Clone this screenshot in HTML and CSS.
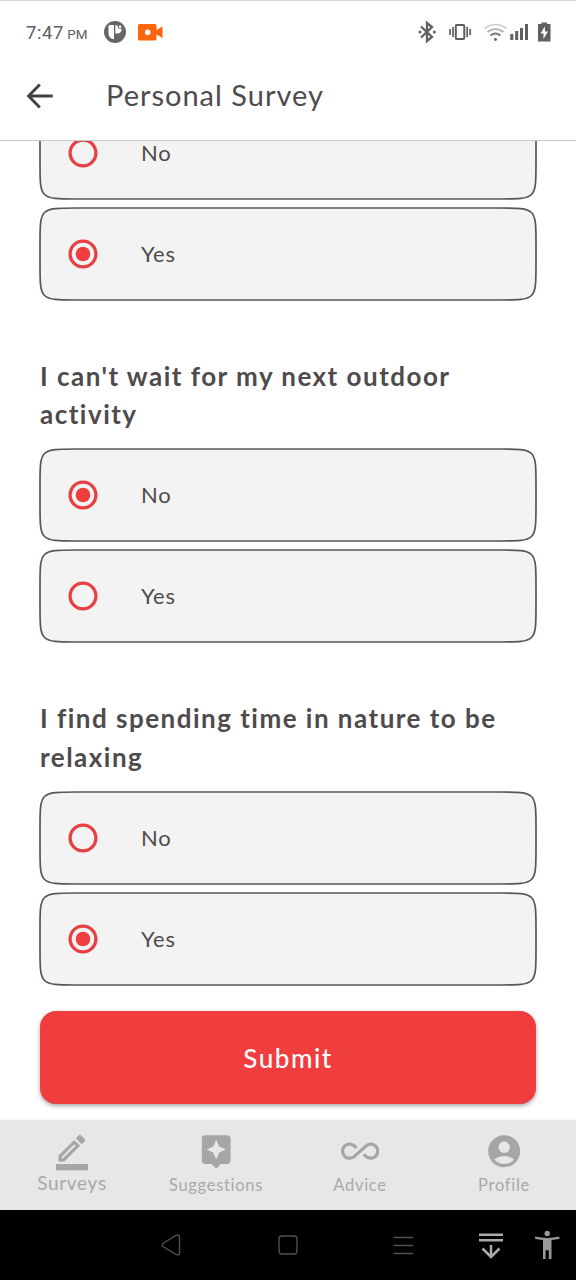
FILE: index.html
```html
<!DOCTYPE html>
<html lang="en">
<head>
<meta charset="utf-8">
<title>Personal Survey</title>
<link rel="stylesheet" href="styles.css">
</head>
<body>
<svg class="defs" aria-hidden="true">
  <symbol id="card" viewBox="0 0 498 94"><path d="M1 37C1 1 1 1 37 1H461C497 1 497 1 497 37V57C497 93 497 93 461 93H37C1 93 1 93 1 57Z" fill="#f3f3f3" stroke="#5d5557" stroke-width="1.700"/></symbol>
  <symbol id="radio-off" viewBox="0 0 30 30"><circle cx="15" cy="15" r="12.900" fill="none" stroke="#e83f43" stroke-width="3.300"/></symbol>
  <symbol id="radio-on" viewBox="0 0 30 30"><circle cx="15" cy="15" r="12.900" fill="none" stroke="#e83f43" stroke-width="3.300"/><circle cx="15" cy="15" r="7.300" fill="#f03e3f"/></symbol>
</svg>
<div class="screen">
  <header class="top">
    <div class="status">
      <span class="clock">7:47 <small>PM</small></span>
      <svg class="app-icon" width="22" height="22" viewBox="0 0 22 22"><circle cx="11" cy="11" r="11" fill="#666"/><path d="M6 4H10V18H8Q4.500 16 4.500 12V5.500Q4.500 4 6 4Z" fill="#fff"/><path d="M11.300 4.300H13.500A2.800 2.800 0 0 0 17.500 7.500A4 4 0 0 1 14 12.500H11.300Z" fill="#fff"/><circle cx="16" cy="5.700" r="1.300" fill="#fff"/></svg>
      <svg class="camera" width="25" height="17" viewBox="0 0 25 17"><path d="M1.500 0H17a1.500 1.500 0 0 1 1.500 1.500V6L24.500 2.500V14L18.500 10.500V15a1.500 1.500 0 0 1-1.500 1.500H1.500A1.500 1.500 0 0 1 0 15V1.500A1.500 1.500 0 0 1 1.500 0Z" fill="#f9660b"/><circle cx="9.700" cy="8.300" r="2.800" fill="#fff"/></svg>
      <span class="spacer"></span>
      <svg width="134" height="24" viewBox="418 20 134 24" fill="none" stroke="#606060">
        <path d="M421 26.500L432 37L427 41V23L432 27L421 37.500" stroke-width="2.300"/><circle cx="420" cy="32" r="1.500" fill="#606060" stroke="none"/><circle cx="434.300" cy="32" r="1.500" fill="#606060" stroke="none"/>
        <rect x="455.800" y="25" width="8.500" height="14" rx="1" stroke-width="2"/><path d="M453 27V37M467.200 27V37M450 29V35M470.200 29V35" stroke-width="1.700"/>
        <g stroke-width="1.700"><path d="M484.500 28.500Q495.500 20.500 506.500 28.500" stroke="#ccc"/><path d="M487.500 32Q495.500 26 503.500 32" stroke="#aaa"/><path d="M490.500 35.500Q495.500 31.500 500.500 35.500" stroke="#777"/></g><circle cx="495.500" cy="39.500" r="1.400" fill="#606060" stroke="none"/>
        <path d="M511.800 40V34M516.700 40V31M521.500 40V28M526.500 40V24" stroke-width="3"/>
        <path d="M538 24H541.500V22.500H547V24H550.500V41.500H538Z" fill="#606060" stroke="none"/><path d="M544.800 26.500L540.500 33.500H543.500V39L548 31.500H545Z" fill="#fff" stroke="none"/>
      </svg>
    </div>
    <div class="title-bar">
      <svg class="back" width="28" height="26" viewBox="0 0 28 26" fill="none" stroke="#454042" stroke-width="2.900"><path d="M26.700 13H3M13.800 1.600L2.600 13L13.800 24.400"/></svg>
      <h1>Personal Survey</h1>
    </div>
  </header>

  <main class="survey">
    <section class="question">
      <div class="options">
        <label class="option"><svg class="card"><use href="#card"/></svg><svg class="radio"><use href="#radio-off"/></svg><span class="answer">No</span></label>
        <label class="option"><svg class="card"><use href="#card"/></svg><svg class="radio"><use href="#radio-on"/></svg><span class="answer">Yes</span></label>
      </div>
    </section>
    <section class="question">
      <h2>I can't wait for my next outdoor<br>activity</h2>
      <div class="options">
        <label class="option"><svg class="card"><use href="#card"/></svg><svg class="radio"><use href="#radio-on"/></svg><span class="answer">No</span></label>
        <label class="option"><svg class="card"><use href="#card"/></svg><svg class="radio"><use href="#radio-off"/></svg><span class="answer">Yes</span></label>
      </div>
    </section>
    <section class="question">
      <h2>I find spending time in nature to be<br>relaxing</h2>
      <div class="options">
        <label class="option"><svg class="card"><use href="#card"/></svg><svg class="radio"><use href="#radio-off"/></svg><span class="answer">No</span></label>
        <label class="option"><svg class="card"><use href="#card"/></svg><svg class="radio"><use href="#radio-on"/></svg><span class="answer">Yes</span></label>
      </div>
    </section>
    <button class="submit">Submit</button>
  </main>

  <nav class="tabs">
    <a class="tab active"><svg width="40" height="40" viewBox="0 0 24 24" fill="#a7a6a6"><path transform="translate(.140 1.700) scale(.940)" d="M17.750 7L14 3.250l-10 10V17h3.750l10-10zm2.960-2.960c.39-.39.39-1.020 0-1.410L18.370.29c-.39-.39-1.020-.39-1.410 0L15 2.250 18.750 6l1.960-1.960zM6.920 15H6v-.92l8-8 .92.92-8 8z"/><path d="M2.400 19.200h19.200v3.800H2.400z"/></svg><span>Surveys</span></a>
    <a class="tab"><svg width="38.400" height="38.400" viewBox="0 0 24 24" fill="#a7a6a6"><path d="M19 2H5a2 2 0 0 0-2 2v14c0 1.100.9 2 2 2h4l3 3 3-3h4c1.100 0 2-.9 2-2V4c0-1.100-.9-2-2-2zm-5.120 10.880L12 17l-1.880-4.120L6 11l4.120-1.880L12 5l1.880 4.120L18 11l-4.120 1.880z"/></svg><span>Suggestions</span></a>
    <a class="tab"><svg width="38.400" height="38.400" viewBox="0 0 24 24" fill="#a7a6a6"><path d="M18.600 6.620c-1.440 0-2.800.56-3.770 1.530L12 10.660 10.480 12h.01L7.800 14.390c-.64.64-1.490.99-2.400.99-1.870 0-3.390-1.510-3.390-3.380S3.530 8.620 5.400 8.620c.91 0 1.760.35 2.440 1.030l1.130 1 1.510-1.340L9.220 8.200C8.200 7.180 6.840 6.620 5.400 6.620 2.420 6.620 0 9.040 0 12s2.420 5.380 5.400 5.380c1.440 0 2.800-.56 3.770-1.530l2.830-2.500.01.010L13.520 12h-.01l2.690-2.390c.64-.64 1.490-.99 2.400-.99 1.870 0 3.390 1.510 3.390 3.380s-1.520 3.380-3.390 3.380c-.9 0-1.760-.35-2.440-1.030l-1.140-1.010-1.510 1.340 1.270 1.120c1.020 1.010 2.370 1.570 3.820 1.570 2.980 0 5.400-2.410 5.400-5.380s-2.420-5.370-5.400-5.370z"/></svg><span>Advice</span></a>
    <a class="tab"><svg width="38.400" height="38.400" viewBox="0 0 24 24" fill="#a7a6a6"><path d="M12 2C6.480 2 2 6.480 2 12s4.480 10 10 10 10-4.480 10-10S17.520 2 12 2zm0 4c1.930 0 3.500 1.570 3.500 3.500S13.930 13 12 13s-3.500-1.570-3.500-3.500S10.070 6 12 6zm0 14c-2.030 0-4.430-.82-6.140-2.880C7.550 15.800 9.680 15 12 15s4.450.8 6.140 2.120C16.430 19.180 14.030 20 12 20z"/></svg><span>Profile</span></a>
  </nav>

  <footer class="system">
    <svg width="576" height="70" viewBox="0 1210 576 70" fill="none">
      <g stroke="#505050" stroke-width="1.400" stroke-linejoin="round" stroke-linecap="round"><path d="M162.900 1243.500Q161.500 1245 162.900 1246.500L176 1254.300Q179.500 1255.500 179.500 1253V1237Q179.500 1234 176 1235.400Z"/><rect x="279" y="1236" width="18" height="18" rx="3"/><path d="M394 1237.500H412.500M394 1245.500H412.500M394 1253.500H412.500"/></g>
      <path d="M479 1234.700H503M479 1240.200H503M491 1245V1257M482.500 1248.500L491 1257L499.500 1248.500" stroke="#aaa" stroke-width="2.500"/>
      <circle cx="547.200" cy="1233.500" r="2.700" fill="#999"/><path d="M535.300 1236.500Q547 1239.300 559.200 1236.500L559.600 1238.700Q556 1239.500 551.500 1240V1259H548.800V1250.300H545.600V1259H543V1240Q538.500 1239.600 534.900 1238.700Z" fill="#999"/>
    </svg>
  </footer>
</div>
</body>
</html>
```
FILE: styles.css
```css
* { box-sizing: border-box; }
body { margin: 0; background: #fff; font-family: Lato, "Open Sans", sans-serif; color: #4f4a4b; }
.defs { position: absolute; width: 0; height: 0; }
.screen { display: flex; flex-direction: column; width: 576px; height: 1280px; overflow: hidden; }

.top { flex: none; height: 141px; border-top: 1px solid #d2d2d2; border-bottom: 1px solid #c9c9c9; }
.status { display: flex; align-items: center; height: 62px; padding: 0 24px 0 26px; }
.clock { width: 78px; padding-top: 2px; font-family: Roboto, sans-serif; font-size: 18.500px; line-height: 24px; color: #606060; white-space: nowrap; letter-spacing: 0.6px; }
.clock small { font-size: 13.500px; margin-left: -2px; letter-spacing: 0; }
.camera { margin-left: 12px; }
.spacer { flex: 1; }
.title-bar { display: flex; align-items: center; gap: 52px; height: 64px; padding-left: 26px; }
.title-bar h1 { margin: 0; font-size: 29px; line-height: 40px; font-weight: 400; letter-spacing: 1px; }
.back { margin-top: 2px; }

.survey { flex: 1; min-height: 0; overflow: hidden; display: flex; flex-direction: column; justify-content: flex-end; padding: 0 39px 16px; }
.question { flex: none; }
.question + .question { margin-top: 55.500px; }
.question h2 { margin: 0 0 14.500px 1px; padding-top: 0.5px; font-size: 26px; line-height: 38.500px; font-weight: 700; letter-spacing: 1.480px; white-space: nowrap; }
.options { display: flex; flex-direction: column; gap: 7px; }
.option { position: relative; display: flex; align-items: center; gap: 43px; height: 94px; padding-left: 29px; font-size: 22px; letter-spacing: 0.8px; }
.answer { position: relative; line-height: 22px; padding-top: 0.5px; }
.card { position: absolute; inset: 0; width: 498px; height: 94px; }
.radio { position: relative; width: 30px; height: 30px; }
.submit { flex: none; height: 93px; margin: 25.500px 1px 0; padding: 0; border: 0; border-radius: 16px; background: #f03e3e; color: #fff; font: 500 26px/40px Lato, sans-serif; letter-spacing: 1.500px; box-shadow: 0 2px 4px rgba(0, 0, 0, 0.35); }

.tabs { flex: none; display: grid; grid-template-columns: repeat(4, 1fr); height: 90px; background: #e7e7e7; box-shadow: 0 0 5px rgba(0, 0, 0, 0.08); }
.tab { display: flex; flex-direction: column; align-items: center; padding-top: 12px; font-size: 16.500px; line-height: 24px; letter-spacing: 0.7px; color: #aaa9a9; }
.tab span { margin-top: 3px; }
.active { font-size: 19px; }
.active span { margin-top: -1px; }
.system { flex: none; height: 70px; background: #000; }
.system svg { display: block; }
```
